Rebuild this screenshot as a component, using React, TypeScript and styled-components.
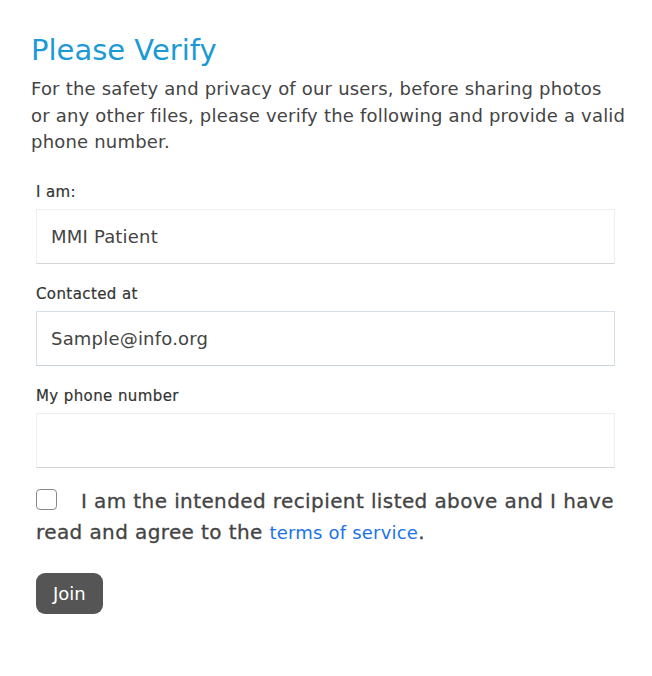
import { createGlobalStyle, styled } from 'styled-components';

const GlobalStyle = createGlobalStyle`
  html, body {
    margin: 0;
    padding: 0;
    background: #fff;
  }
  body {
    font-family: 'DejaVu Sans', 'Open Sans', sans-serif;
    color: #444;
  }
`;

const Container = styled.div`
  width: 652px;
  padding: 30px 24px 40px 31px;
  box-sizing: border-box;
`;

const Title = styled.h1`
  margin: 0;
  font-size: 29px;
  font-weight: 400;
  line-height: 40px;
  color: #1b9ad6;
`;

const Intro = styled.p`
  margin: 6px 0 0;
  font-size: 18px;
  letter-spacing: 0.2px;
  line-height: 26.5px;
  color: #444;
`;

const Form = styled.form`
  margin-top: 26px;
  padding-left: 5px;
  padding-right: 13px;
  display: flex;
  flex-direction: column;
`;

const Field = styled.div`
  display: flex;
  flex-direction: column;
  margin-bottom: 20px;
`;

const Label = styled.label`
  font-size: 15px;
  letter-spacing: 0.4px;
  color: #333;
  line-height: 20px;
  margin-bottom: 7px;
  -webkit-text-stroke: 0.2px #333;
`;

const Input = styled.input<{ $tint?: boolean }>`
  height: 55px;
  box-sizing: border-box;
  padding: 0 14px;
  font-family: inherit;
  font-size: 18px;
  letter-spacing: 0.2px;
  color: #444;
  background: #fff;
  border: 1px solid ${(props) => (props.$tint ? '#d6e0ea' : '#eeeeee')};
  border-bottom-color: ${(props) => (props.$tint ? '#c9d3dd' : '#d4d4d4')};
  border-radius: 0;
  outline: none;
`;

const Agree = styled.div`
  margin: -2px -6px 0 0;
  font-size: 20px;
  letter-spacing: 0.4px;
  line-height: 31px;
  color: #444;
  -webkit-text-stroke: 0.3px #444;
`;

const Check = styled.input`
  appearance: none;
  width: 21px;
  height: 21px;
  margin: 0 24px 0 0;
  border: 1.5px solid #888;
  border-radius: 4px;
  vertical-align: -2px;
  background: #fff;
`;

const TermsLink = styled.a`
  color: #1a73e8;
  font-size: 18px;
  letter-spacing: 0.2px;
  text-decoration: none;
  -webkit-text-stroke: 0;
`;

const JoinBtn = styled.button`
  align-self: flex-start;
  margin-top: 25px;
  height: 41px;
  padding: 0 17px;
  border: none;
  border-radius: 9px;
  background: #555;
  color: #fff;
  font-family: inherit;
  font-size: 18px;
`;

function App() {
  return (
    <>
      <GlobalStyle />
      <Container>
        <Title>Please Verify</Title>
        <Intro>
          For the safety and privacy of our users, before sharing photos
          <br />
          or any other files, please verify the following and provide a valid phone number.
        </Intro>
        <Form onSubmit={(e) => e.preventDefault()}>
          <Field>
            <Label>I am:</Label>
            <Input defaultValue="MMI Patient" />
          </Field>
          <Field>
            <Label>Contacted at</Label>
            <Input $tint defaultValue="Sample@info.org" />
          </Field>
          <Field>
            <Label>My phone number</Label>
            <Input />
          </Field>
          <Agree>
            <Check type="checkbox" />
            I am the intended recipient listed above and I have read and agree to the{' '}
            <TermsLink href="#">terms of service</TermsLink>.
          </Agree>
          <JoinBtn type="submit">Join</JoinBtn>
        </Form>
      </Container>
    </>
  );
}

export default App;
